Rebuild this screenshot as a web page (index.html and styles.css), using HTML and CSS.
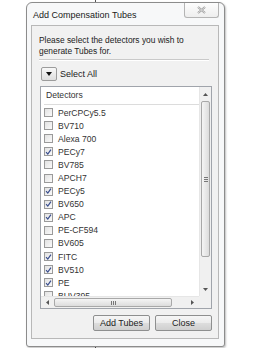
FILE: index.html
```html
<!DOCTYPE html>
<html lang="en">
<head>
  <meta charset="UTF-8">
  <title>Add Compensation Tubes</title>
  <link rel="stylesheet" href="styles.css">
</head>
<body>
  <div class="backline"></div>
  <div class="window">
    <div class="titlebar">
      <span class="title">Add Compensation Tubes</span>
      <button class="close-btn">
        <svg width="9" height="8" viewBox="0 0 9 8">
          <path d="M1 1 L8 7 M8 1 L1 7" stroke="#9a9a9a" stroke-width="2" fill="none"/>
          <path d="M1 1 L8 7 M8 1 L1 7" stroke="#f6f6f6" stroke-width="0.7" fill="none"/>
        </svg>
      </button>
    </div>
    <div class="panel">
      <p class="intro">Please select the detectors you wish to generate Tubes for.</p>
      <div class="separator"></div>
      <div class="select-row">
        <button class="drop-btn">
          <svg width="6" height="4" viewBox="0 0 6 4"><path d="M0 0 H6 L3 4 Z" fill="#111"/></svg>
        </button>
        <span>Select All</span>
      </div>
      <div class="listbox">
        <div class="list-main">
          <div class="list-header">Detectors</div>
          <div class="rows" id="rows"></div>
        </div>
        <div class="vscroll">
          <div class="arrow">
            <svg width="5" height="3" viewBox="0 0 5 3"><path d="M0 3 L2.5 0 L5 3 Z" fill="#555"/></svg>
          </div>
          <div class="vthumb"><span class="grip-v"></span></div>
          <div class="vtrack"></div>
          <div class="arrow">
            <svg width="5" height="3" viewBox="0 0 5 3"><path d="M0 0 L5 0 L2.5 3 Z" fill="#555"/></svg>
          </div>
        </div>
        <div class="hscroll">
          <div class="harrow">
            <svg width="3" height="5" viewBox="0 0 3 5"><path d="M3 0 L3 5 L0 2.5 Z" fill="#555"/></svg>
          </div>
          <div class="hthumb"><span class="grip-h"></span></div>
          <div class="htrack"></div>
          <div class="harrow">
            <svg width="3" height="5" viewBox="0 0 3 5"><path d="M0 0 L3 2.5 L0 5 Z" fill="#555"/></svg>
          </div>
        </div>
        <div class="corner"></div>
      </div>
      <div class="actions">
        <button class="btn">Add Tubes</button>
        <button class="btn">Close</button>
      </div>
    </div>
  </div>

  <script>
    const detectors = [
      ["PerCPCy5.5", false],
      ["BV710", false],
      ["Alexa 700", false],
      ["PECy7", true],
      ["BV785", false],
      ["APCH7", false],
      ["PECy5", true],
      ["BV650", true],
      ["APC", true],
      ["PE-CF594", false],
      ["BV605", false],
      ["FITC", true],
      ["BV510", true],
      ["PE", true],
      ["BUV395", false]
    ];

    const rows = document.getElementById("rows");
    detectors.forEach(([name, checked]) => {
      const row = document.createElement("div");
      row.className = "row";
      const box = document.createElement("span");
      box.className = "check" + (checked ? " checked" : "");
      if (checked) {
        box.innerHTML = '<svg width="8" height="8" viewBox="0 0 8 8"><path d="M1.2 4.2 L3.2 6.4 L6.8 1.2" stroke="#3a4f8f" stroke-width="1.4" fill="none"/></svg>';
      }
      const label = document.createElement("span");
      label.textContent = name;
      row.append(box, label);
      rows.append(row);
    });
  </script>
</body>
</html>
```

FILE: styles.css
```css
* {
  box-sizing: border-box;
  margin: 0;
  padding: 0;
}

body {
  background: #fff;
  font-family: "Liberation Sans", Arial, sans-serif;
  color: #222;
  position: relative;
  width: 254px;
  height: 348px;
  overflow: hidden;
}

.backline {
  position: absolute;
  left: 95px;
  top: 0;
  width: 1px;
  height: 348px;
  background: #555;
}

.window {
  position: relative;
  margin: 2px 0 0 26px;
  width: 199px;
  height: 345px;
  border: 1px solid #8c8c8c;
  border-radius: 6px 6px 3px 3px;
  background: #f7f8f9;
  box-shadow: 1px 1px 2px rgba(0, 0, 0, 0.25);
  display: flex;
  flex-direction: column;
  padding: 0 5px 7px 4px;
}

.titlebar {
  height: 22px;
  display: flex;
  align-items: flex-start;
  justify-content: space-between;
}

.title {
  font-size: 9px;
  padding: 7px 0 0 2px;
  color: #1a1a1a;
}

.close-btn {
  width: 35px;
  height: 15px;
  border: 1px solid #b4b4b4;
  border-top: none;
  border-radius: 0 0 3px 3px;
  background: linear-gradient(#fdfdfd, #eeeeee);
  display: flex;
  align-items: center;
  justify-content: center;
}

.panel {
  flex: 1;
  border: 1px solid #b8b8b8;
  background: #f1f1f1;
  display: flex;
  flex-direction: column;
  padding: 9px 6px 0 7px;
}

.intro {
  font-size: 8.4px;
  line-height: 11px;
  width: 150px;
  color: #222;
}

.separator {
  height: 1px;
  background: #c9c9c9;
  border-bottom: 1px solid #fff;
  box-sizing: content-box;
  margin: 2px 3px 6px 0;
}

.select-row {
  display: flex;
  align-items: center;
  gap: 3px;
  font-size: 9px;
  margin-left: 2px;
}

.drop-btn {
  width: 16px;
  height: 14px;
  border: 1px solid #9c9c9c;
  border-radius: 2px;
  background: linear-gradient(#f8f8f8, #dedede);
  display: flex;
  align-items: center;
  justify-content: center;
}

.listbox {
  margin: 5px 0 0 1px;
  width: 172px;
  height: 223px;
  border: 1px solid #a0a4ab;
  background: #fff;
  display: grid;
  grid-template-columns: 1fr 12px;
  grid-template-rows: 1fr 12px;
}

.list-main {
  overflow: hidden;
  padding-left: 3px;
}

.list-header {
  height: 18px;
  border-bottom: 1px solid #dcdcdc;
  font-size: 8.6px;
  line-height: 17px;
  padding-left: 2px;
  color: #333;
}

.rows {
  padding-top: 1px;
}

.row {
  height: 13.1px;
  display: flex;
  align-items: center;
  gap: 5px;
  font-size: 8.6px;
  color: #333;
}

.check {
  width: 9px;
  height: 9px;
  border: 1px solid #9a9a9a;
  background: linear-gradient(135deg, #e2e2e2, #fafafa);
  display: flex;
  align-items: center;
  justify-content: center;
}

.vscroll {
  display: flex;
  flex-direction: column;
  background: #f0f0f0;
  border-left: 1px solid #e6e6e6;
}

.arrow {
  height: 14px;
  display: flex;
  align-items: center;
  justify-content: center;
}

.vthumb {
  height: 156px;
  margin: 0 1px;
  border: 1px solid #a8a8a8;
  border-radius: 2px;
  background: linear-gradient(90deg, #f5f5f5, #dcdcdc);
  display: flex;
  align-items: center;
  justify-content: center;
}

.grip-v {
  width: 4px;
  height: 5px;
  border-top: 1px solid #777;
  border-bottom: 1px solid #777;
  position: relative;
}

.grip-v::after {
  content: "";
  position: absolute;
  left: 0;
  top: 1px;
  width: 4px;
  height: 1px;
  background: #777;
}

.vtrack {
  flex: 1;
}

.hscroll {
  display: flex;
  background: #f0f0f0;
  border-top: 1px solid #e6e6e6;
}

.harrow {
  width: 13px;
  display: flex;
  align-items: center;
  justify-content: center;
}

.hthumb {
  width: 118px;
  margin: 1px 0;
  border: 1px solid #a8a8a8;
  border-radius: 2px;
  background: linear-gradient(#f5f5f5, #dcdcdc);
  display: flex;
  align-items: center;
  justify-content: center;
}

.grip-h {
  width: 5px;
  height: 4px;
  border-left: 1px solid #777;
  border-right: 1px solid #777;
  position: relative;
}

.grip-h::after {
  content: "";
  position: absolute;
  top: 0;
  left: 1px;
  width: 1px;
  height: 4px;
  background: #777;
}

.htrack {
  flex: 1;
}

.corner {
  background: #f0f0f0;
}

.actions {
  display: flex;
  justify-content: flex-end;
  gap: 5px;
  width: 173px;
  margin-top: 6px;
}

.btn {
  width: 57px;
  height: 16px;
  border: 1px solid #8e8f8f;
  border-radius: 2px;
  background: linear-gradient(#f6f6f6 0%, #ebebeb 50%, #dddddd 51%, #cfcfcf 100%);
  font-family: "Liberation Sans", Arial, sans-serif;
  font-size: 9px;
  color: #222;
}
```
